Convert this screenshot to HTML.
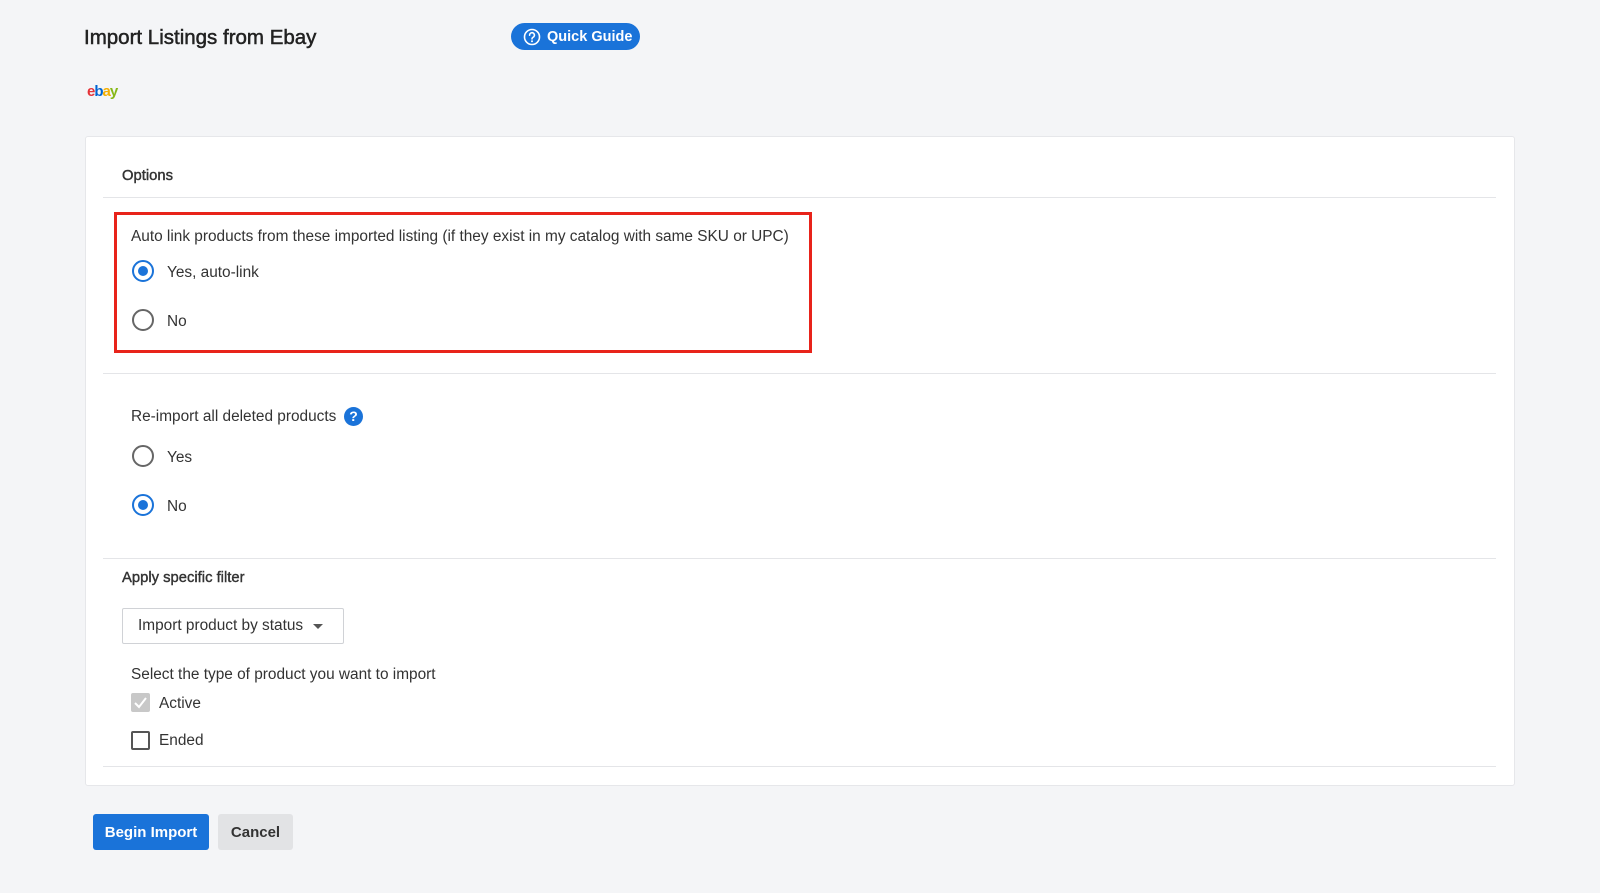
<!DOCTYPE html>
<html><head><meta charset="utf-8"><style>
*{box-sizing:border-box;margin:0;padding:0}
body{width:1600px;height:893px;background:#f4f5f7;font-family:"Liberation Sans",sans-serif;color:#333;position:relative;overflow:hidden;font-size:15px}
.a{position:absolute;white-space:nowrap}
.title{left:84px;top:26px;font-size:20.5px;color:#222;-webkit-text-stroke:0.5px #222}
.qg{left:511px;top:23px;width:129px;height:27px;border-radius:14px;background:#1a73d9;color:#fff;font-size:14.5px;font-weight:bold;display:flex;align-items:center;padding-left:12px;gap:6px}
.card{left:85px;top:136px;width:1430px;height:650px;background:#fff;border:1px solid #e6e7ea;border-radius:3px}
.hr{height:1px;background:#e4e5e8;left:103px;width:1393px}
.radio{width:22px;height:22px;border-radius:50%;border:2px solid #666}
.radio.on{border-color:#1a73d9}
.radio.on::after{content:"";position:absolute;left:4px;top:4px;width:10px;height:10px;border-radius:50%;background:#1a73d9}
.lbl{font-size:15.4px;color:#333}
.h{font-size:14.8px;color:#333;-webkit-text-stroke:0.4px #333}
.btn{top:814px;height:36px;border-radius:3px;font-size:15px;font-weight:bold;display:flex;align-items:center;justify-content:center}
</style></head><body>
<div class="a title">Import Listings from Ebay</div>
<div class="a qg"><svg width="18" height="18" viewBox="0 0 18 18"><circle cx="9" cy="9" r="7.5" fill="none" stroke="#fff" stroke-width="1.6"/><path d="M6.6 7.2a2.4 2.4 0 1 1 3.4 2.1c-.7.4-1 .8-1 1.6" fill="none" stroke="#fff" stroke-width="1.6" stroke-linecap="round"/><circle cx="9" cy="13.2" r="1" fill="#fff"/></svg>Quick Guide</div>
<div class="a" style="left:87px;top:83px;font-size:15px;letter-spacing:-1px;font-weight:bold"><span style="color:#e53238">e</span><span style="color:#0064d2">b</span><span style="color:#f5af02">a</span><span style="color:#86b817">y</span></div>
<div class="a card"></div>
<div class="a h" style="left:122px;top:168px">Options</div>
<div class="a hr" style="top:197px"></div>
<div class="a" style="left:114px;top:212px;width:698px;height:141px;border:3px solid #e8231a"></div>
<div class="a lbl" style="left:131px;top:228px">Auto link products from these imported listing (if they exist in my catalog with same SKU or UPC)</div>
<div class="a radio on" style="left:132px;top:260px"></div>
<div class="a lbl" style="left:167px;top:264px">Yes, auto-link</div>
<div class="a radio" style="left:132px;top:309px"></div>
<div class="a lbl" style="left:167px;top:313px">No</div>
<div class="a hr" style="top:373px"></div>
<div class="a lbl" style="left:131px;top:408px">Re-import all deleted products</div>
<div class="a" style="left:344px;top:407px;width:19px;height:19px;border-radius:50%;background:#1a73d9;color:#fff;font-size:14px;font-weight:bold;text-align:center;line-height:19px">?</div>
<div class="a radio" style="left:132px;top:445px"></div>
<div class="a lbl" style="left:167px;top:449px">Yes</div>
<div class="a radio on" style="left:132px;top:494px"></div>
<div class="a lbl" style="left:167px;top:498px">No</div>
<div class="a hr" style="top:558px"></div>
<div class="a h" style="left:122px;top:570px">Apply specific filter</div>
<div class="a" style="left:122px;top:608px;width:222px;height:36px;border:1px solid #d0d2d6;border-radius:2px;display:flex;align-items:center;padding-left:15px;font-size:15.4px">Import product by status<span style="margin-left:10px;width:0;height:0;border-left:5px solid transparent;border-right:5px solid transparent;border-top:5px solid #555"></span></div>
<div class="a lbl" style="left:131px;top:666px">Select the type of product you want to import</div>
<div class="a" style="left:131px;top:693px;width:19px;height:19px;border-radius:2px;background:#c8c8c8"><svg width="19" height="19"><path d="M4 10l4 4 7-9" fill="none" stroke="#fff" stroke-width="2"/></svg></div>
<div class="a lbl" style="left:159px;top:695px">Active</div>
<div class="a" style="left:131px;top:731px;width:19px;height:19px;border-radius:2px;border:2px solid #555"></div>
<div class="a lbl" style="left:159px;top:732px">Ended</div>
<div class="a hr" style="top:766px"></div>
<div class="a btn" style="left:93px;width:116px;background:#1a73d9;color:#fff">Begin Import</div>
<div class="a btn" style="left:218px;width:75px;background:#e2e3e5;color:#333">Cancel</div>
</body></html>
